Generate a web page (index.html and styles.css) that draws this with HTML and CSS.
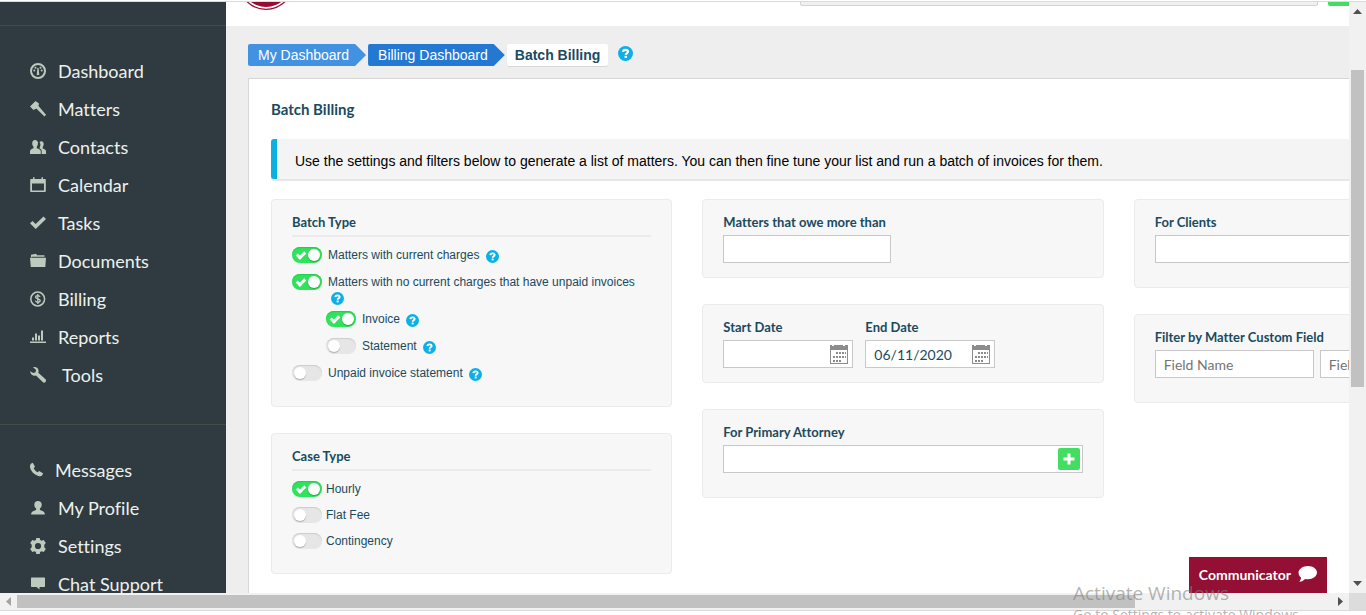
FILE: index.html
```html
<!DOCTYPE html>
<html lang="en">
<head>
<meta charset="utf-8">
<title>Batch Billing</title>
<link rel="stylesheet" href="styles.css">
</head>
<body>
<svg class="defs" aria-hidden="true">
  <symbol id="help" viewBox="0 0 14 14"><circle cx="7" cy="7" r="7" fill="#0cb0e6"/><path d="M4.700 5.500C4.800 4 5.900 3.600 7.100 3.600c1.300 0 2.200.7 2.200 1.700 0 1.500-2.100 1.500-2.100 3" fill="none" stroke="#fff" stroke-width="2"/><rect x="6.100" y="9.200" width="2.200" height="2" fill="#fff"/></symbol>
  <symbol id="cal" viewBox="0 0 18 19"><path d="M0 0h2v1h2V0h9v1h2V0h3v19H0z" fill="#8c8c8c"/><path d="M1 5h16v13H1z" fill="#fff"/><path d="M6 7h2v2H6zM9 7h2v2H9zM12 7h2v2h-2zM15 7h1v2h-1zM3 11h2v2H3zM6 11h2v2H6zM9 11h2v2H9zM12 11h2v2h-2zM15 11h1v2h-1zM3 15h2v2H3zM6 15h2v2H6zM9 15h2v2H9z" fill="#8c8c8c"/></symbol>
</svg>
<div class="window">
  <div class="viewport">
    <div class="app">
      <aside class="sidebar">
        <div class="sidebar-top"></div>
        <nav class="menu">
          <a href="#"><svg width="16" height="16" viewBox="0 0 16 16"><circle cx="8" cy="8" r="7" fill="none" stroke="currentColor" stroke-width="2"/><circle cx="4.300" cy="7.500" r="1" /><circle cx="5.500" cy="4.700" r="1"/><circle cx="10.500" cy="4.700" r="1"/><circle cx="11.700" cy="7.500" r="1"/><path d="M7.400 5h1.200l.7 7H6.700z"/></svg>Dashboard</a>
          <a href="#"><svg width="16" height="16" viewBox="0 0 16 16"><path d="M0 5.500 5.500 0 9 2.500 8.500 5 16 13.800 14.500 15.500 6.300 7.500 3.500 9z"/></svg>Matters</a>
          <a href="#"><svg width="16" height="16" viewBox="0 0 16 16"><path d="M5 1c2 0 3 1.300 3 3.200 0 1.600-.7 2.600-1.200 3.600v1.400c2 .8 4 1.300 4 3.300V15H0v-2.500c0-2 1.600-2.500 3.500-3.300V7.800C2.700 6.800 2.200 5.700 2.200 4.200 2.200 2.300 3.200 1 5 1z"/><path d="M9.500 3c.5-.6 1.100-.8 1.700-.8 1.600 0 2.500 1.200 2.500 2.800 0 1.500-.6 2.300-1 3v1.600c1.800.7 3.300 1.200 3.300 3V15h-4.300v-2.600c0-1.800-1-2.600-2.300-3.200.6-1.200 1.100-2.400 1-4.200z"/></svg>Contacts</a>
          <a href="#"><svg width="16" height="16" viewBox="0 0 16 16"><path d="M1 2h2V.3h1.500V2h7V.3H13V2h2c.6 0 .8.300.8.800V14c0 .7-.3 1-.8 1H1c-.6 0-.8-.3-.8-1V2.800C.2 2.300.4 2 1 2zm1 4.500v7h12v-7z"/></svg>Calendar</a>
          <a href="#"><svg width="16" height="16" viewBox="0 0 16 16"><path d="M0 8.300 2.500 6l3.200 3L13.500 1.500 16 4 5.700 14z"/></svg>Tasks</a>
          <a href="#"><svg width="16" height="16" viewBox="0 0 16 16"><path d="M1 3.500V1.800l5-1 1 1.400h7.500v1.500H2v.6H1z"/><path d="M0 4.800h16L15.300 14H.8z"/></svg>Documents</a>
          <a href="#"><svg width="16" height="16" viewBox="0 0 16 16"><circle cx="7.700" cy="8" r="6.900" fill="none" stroke="currentColor" stroke-width="1.500"/><path d="M10 5.900C9.700 5 8.900 4.700 7.800 4.700c-1.300 0-2.200.6-2.200 1.600 0 2.200 4.600 1 4.600 3.300 0 1.100-1 1.700-2.300 1.700s-2.300-.5-2.600-1.600M7.800 3v10" fill="none" stroke="currentColor" stroke-width="1.300"/></svg>Billing</a>
          <a href="#"><svg width="16" height="16" viewBox="0 0 16 16"><path d="M0 12.500h16V14H0zM2 8.500h2v3H2zM5 4.500h2v7H5zM8 6.500h2v5H8zM11 1.500h2v10h-2z"/></svg>Reports</a>
          <a href="#"><svg width="16" height="16" viewBox="0 0 16 16"><path d="M3 .3C5.500-.5 8 .8 8.500 3.200c.2.900.1 1.700-.2 2.500l7.200 6.600c.7.700.6 1.900 0 2.600-.7.900-2 1-2.800.2L6 8.500C3.800 9.300.5 8 .1 4.200L3.200 6 5.600 5.300 6 2.800z"/></svg>&nbsp;Tools</a>
        </nav>
        <nav class="menu">
          <a href="#"><svg width="13" height="16" viewBox="0 0 13 16"><path d="M.8 1.700 2.800.8 5 4.800 3.700 6.300c.8 1.700 2 3 3.900 4l1.500-1.200 4 2.200-1 2.100c-.8.900-2.200 1-3.700.5C4 12.800.4 8.600 0 5 0 3.500.2 2.500.8 1.700z"/></svg>Messages</a>
          <a href="#"><svg width="16" height="16" viewBox="0 0 16 16"><path d="M8 1c2.400 0 3.700 1.400 3.700 3.700 0 1.600-.8 2.800-1.800 3.900v1.500c2.600.8 5 1.700 5 4.500H1.100c0-2.800 2.500-3.700 5-4.500V8.600c-1-1.100-1.800-2.300-1.800-3.900C4.300 2.400 5.600 1 8 1z"/></svg>My Profile</a>
          <a href="#"><svg width="16" height="16" viewBox="0 0 16 16"><path fill-rule="evenodd" d="m6.300 0h3.400l.5 2.100 1.300.7 2.200-.7L15.800 5l-1.500 1.700v2.600l1.500 1.700-2.100 2.900-2.200-.7-1.300.7L9.700 16H6.300l-.5-2.100-1.300-.7-2.200.7L.2 11l1.500-1.700V6.700L.2 5l2.100-2.900 2.200.7 1.300-.7zM8 4.900a3.100 3.100 0 1 0 0 6.200 3.100 3.100 0 0 0 0-6.200z"/></svg>Settings</a>
          <a href="#"><svg width="16" height="16" viewBox="0 0 16 16"><path d="M2 1.500h12c.7 0 1 .3 1 1V10c0 .7-.3 1-1 1h-4.500v2.500L6.500 11H2c-.7 0-1-.3-1-1V2.500c0-.7.3-1 1-1z"/></svg>Chat Support</a>
        </nav>
      </aside>
      <div class="page">
        <header class="topbar">
          <svg class="logo" width="56" height="56" viewBox="0 0 56 56"><circle cx="28" cy="28" r="27.300" fill="#fff" stroke="#960c32" stroke-width="1.300"/><circle cx="28" cy="28" r="25" fill="#960c32"/></svg>
          <input class="search" type="search" aria-label="Search">
          <button class="topbar-add" aria-label="Add"></button>
        </header>
        <main>
          <div class="crumbs">
            <a class="crumb crumb-light" href="#">My Dashboard</a>
            <a class="crumb" href="#">Billing Dashboard</a>
            <strong class="crumb-current">Batch Billing</strong>
            <button class="crumb-help" aria-label="Help"><svg width="15" height="15"><use href="#help"/></svg></button>
          </div>
          <section class="panel">
            <h1>Batch Billing</h1>
            <p class="notice">Use the settings and filters below to generate a list of matters. You can then fine tune your list and run a batch of invoices for them.</p>
            <div class="columns">
              <div class="column">
                <fieldset class="card">
                  <h2 class="ruled">Batch Type</h2>
                  <div class="option"><input type="checkbox" id="o1" checked><div class="option-text"><label for="o1">Matters with current charges</label> <svg class="help"><use href="#help"/></svg></div></div>
                  <div class="option"><input type="checkbox" id="o2" checked><div class="option-text"><label for="o2">Matters with no current charges that have unpaid invoices</label> <svg class="help"><use href="#help"/></svg></div></div>
                  <div class="option nested"><input type="checkbox" id="o3" checked><div class="option-text"><label for="o3">Invoice</label> <svg class="help"><use href="#help"/></svg></div></div>
                  <div class="option nested"><input type="checkbox" id="o4"><div class="option-text"><label for="o4">Statement</label> <svg class="help"><use href="#help"/></svg></div></div>
                  <div class="option"><input type="checkbox" id="o5"><div class="option-text"><label for="o5">Unpaid invoice statement</label> <svg class="help"><use href="#help"/></svg></div></div>
                </fieldset>
                <fieldset class="card compact">
                  <h2 class="ruled">Case Type</h2>
                  <div class="option"><input type="checkbox" id="c1" checked><label class="option-text" for="c1">Hourly</label></div>
                  <div class="option"><input type="checkbox" id="c2"><label class="option-text" for="c2">Flat Fee</label></div>
                  <div class="option"><input type="checkbox" id="c3"><label class="option-text" for="c3">Contingency</label></div>
                </fieldset>
              </div>
              <div class="column">
                <div class="card">
                  <label class="title" for="owe">Matters that owe more than</label>
                  <div class="field amount"><input type="text" id="owe"></div>
                </div>
                <div class="card dates">
                  <div>
                    <label class="title" for="start">Start Date</label>
                    <div class="field date"><input type="text" id="start"><button aria-label="Pick start date"><svg width="18" height="19"><use href="#cal"/></svg></button></div>
                  </div>
                  <div>
                    <label class="title" for="end">End Date</label>
                    <div class="field date"><input type="text" id="end" value="06/11/2020"><button aria-label="Pick end date"><svg width="18" height="19"><use href="#cal"/></svg></button></div>
                  </div>
                </div>
                <div class="card tall">
                  <label class="title" for="attorney">For Primary Attorney</label>
                  <div class="field"><input type="text" id="attorney"><button class="add" aria-label="Add attorney"><svg width="12" height="12" viewBox="0 0 12 12"><path d="M6 0.500v11M0.500 6h11" stroke="#fff" stroke-width="3"/></svg></button></div>
                </div>
              </div>
              <div class="column">
                <div class="card tall">
                  <label class="title" for="clients">For Clients</label>
                  <div class="field"><input type="text" id="clients"></div>
                </div>
                <div class="card tall">
                  <label class="title" for="fname">Filter by Matter Custom Field</label>
                  <div class="pair">
                    <div class="field custom"><input type="text" id="fname" placeholder="Field Name"></div>
                    <div class="field custom"><input type="text" aria-label="Field Value" placeholder="Field Value"></div>
                  </div>
                </div>
              </div>
            </div>
          </section>
        </main>
      </div>
    </div>
    <button class="communicator">Communicator<svg width="19" height="16" viewBox="0 0 19 16"><path d="M10 0c5 0 9 2.900 9 6.600s-4 6.700-9 6.700c-1 0-2-.1-2.900-.3C5.700 14.500 3.500 15.700 1.300 16c1-1.300 1.700-2.700 1.700-4.400C1.400 10.300.5 8.600.5 6.600.5 2.900 5 0 10 0z" fill="#fff"/></svg></button>
  </div>
  <div class="scroll-y"><svg width="9" height="5"><path d="M0 5 4.500 0 9 5z"/></svg><div class="thumb-y"></div><svg width="9" height="5"><path d="M0 0 4.500 5 9 0z"/></svg></div>
  <div class="scroll-x"><svg class="disabled" width="5" height="9"><path d="M5 0 0 4.500 5 9z"/></svg><div class="track-x"><div class="thumb-x"></div></div><svg width="5" height="9"><path d="M0 0 5 4.500 0 9z"/></svg></div>
  <div class="corner"></div>
</div>
<div class="watermark"><div class="watermark-title">Activate Windows</div><div>Go to Settings to activate Windows.</div></div>
</body>
</html>
```
FILE: styles.css
```css
* { box-sizing: border-box; }

body {
  margin: 0;
  height: 100vh;
  padding: 1px 0 4px;
  display: flex;
  overflow: hidden;
  position: relative;
  background: #fff;
  color: #1a4a5e;
  font-family: "Liberation Sans", Arial, sans-serif;
  font-variant-ligatures: none;
}

h1, h2, p, fieldset { margin: 0; padding: 0; border: 0; }
button { border: 0; padding: 0; background: none; font: inherit; color: inherit; }
a { text-decoration: none; }
.defs { position: absolute; width: 0; height: 0; }

.window {
  flex: 1;
  min-width: 0;
  display: grid;
  grid-template: minmax(0, 1fr) 17px / minmax(0, 1fr) 17px;
  border-top: 1px solid #d9dadb;
  border-bottom: 1px solid #d9d9d9;
}
.viewport { position: relative; overflow: hidden; }
.app { display: flex; min-width: 1580px; min-height: 100%; }

/* Sidebar */
.sidebar { width: 226px; flex: none; background: #2f3b40; }
.sidebar-top { height: 24px; border-bottom: 1px solid #424c4b; }
.menu { padding: 26px 0 30px; border-bottom: 1px solid #424c4b; }
.menu:last-child { border-bottom: 0; }
.menu a {
  display: flex;
  align-items: center;
  gap: 12px;
  height: 38px;
  padding-left: 30px;
  color: #edf1ee;
  font-family: Lato, sans-serif;
  font-size: 18px;
  line-height: 38px;
}
.menu svg { color: #bccbbd; fill: currentColor; flex: none; }

/* Header */
.page { flex: 1; min-width: 0; background: #eee; }
.topbar {
  height: 24px;
  display: flex;
  align-items: flex-start;
  justify-content: flex-start;
  overflow: hidden;
  background: #fff;
  padding-left: 12px;
}
.logo { flex: none; margin-top: -48px; }
.search {
  width: 518px;
  height: 28px;
  margin: -24px 10px 0 506px;
  border: 1px solid #d2d2d2;
  border-radius: 2px;
  background: #f0f0f0;
}
.topbar-add { width: 30px; height: 28px; margin-top: -24px; border-radius: 2px; background: #43dd61; }

/* Breadcrumbs */
main { padding: 18px 22px 30px; }
.crumbs { display: flex; gap: 2px; margin-bottom: 12px; font-size: 14px; line-height: 22px; }
.crumb {
  padding: 0 17px 0 10px;
  color: #fff;
  background: #2379d2;
  border-radius: 2px;
  clip-path: polygon(0 0, calc(100% - 11px) 0, 100% 50%, calc(100% - 11px) 100%, 0 100%);
}
.crumb-light { background: #4391e1; }
.crumb-current { padding: 0 8px; background: #fff; border-radius: 2px; box-shadow: 0 1px 0 #d8d8d8; }
.crumb-help { display: flex; margin: 2px 8px; }

/* Panel */
.panel { padding: 20px 22px 40px; border: 1px solid #d7d7d7; background: #fff; }
h1 { margin-bottom: 20px; font-family: Lato, sans-serif; font-size: 15px; line-height: 20px; }
.notice {
  margin-bottom: 20px;
  padding: 4px 18px 0;
  border-left: 6px solid #0cb0e0;
  border-radius: 3px;
  box-shadow: 0 2px 0 #e6e6e6;
  background: #f4f4f4;
  color: #000;
  font-size: 14px;
  line-height: 36px;
}
.columns { display: grid; grid-template-columns: repeat(3, minmax(0, 1fr)); gap: 30px; align-items: start; }
.column { display: grid; gap: 26px; }

.card { min-width: 0; padding: 14px 20px; border: 1px solid #ebebeb; border-radius: 4px; background: #f7f7f7; }
.card.tall { padding-bottom: 24px; }
h2, .title { display: block; padding-bottom: 5px; font-family: Lato, sans-serif; font-weight: bold; font-size: 13px; line-height: 16px; }
.ruled { margin-bottom: 10px; border-bottom: 2px solid #ebebeb; }

.option { display: flex; gap: 6px; min-height: 27px; padding-bottom: 6px; font-size: 12px; line-height: 15px; }
.option-text { padding-top: 1px; }
.option.nested { padding-left: 34px; }
.compact .option { gap: 4px; min-height: 26px; }
.help { width: 13px; height: 13px; margin-left: 3px; vertical-align: -4px; }

/* Toggle switch */
.option input {
  appearance: none;
  position: relative;
  flex: none;
  width: 30px;
  height: 16px;
  margin: 0;
  border-radius: 8px;
  background: #e6e6e6;
  box-shadow: inset 0 1px 1px #ccc;
}
.option input::after {
  content: "";
  position: absolute;
  top: 2px;
  left: 2px;
  width: 12px;
  height: 12px;
  border-radius: 50%;
  background: #fff;
  box-shadow: 0 1px 1px rgba(0, 0, 0, .25);
}
.option input:checked { background: #2fe35c; box-shadow: inset 0 1px 1px #28c850; }
.option input:checked::after { left: 16px; }
.option input:checked::before {
  content: "";
  position: absolute;
  box-sizing: border-box;
  top: 3px;
  left: 6px;
  width: 6px;
  height: 9px;
  border: solid #fff;
  border-width: 0 3px 3px 0;
  transform: rotate(45deg);
}

/* Fields */
.field { display: flex; align-items: center; height: 28px; border: 1px solid #c8c8c8; background: #fff; padding-right: 2px; }
.field input {
  flex: 1;
  min-width: 0;
  height: 26px;
  padding: 0 8px;
  border: 0;
  outline: 0;
  background: none;
  color: #1a4a5e;
  font-family: Lato, sans-serif;
  font-size: 14px;
}
.field input::placeholder { color: #757575; }
.field button { display: flex; align-items: center; justify-content: center; }
.amount { width: 168px; }
.date { width: 130px; padding-right: 4px; }
.dates { display: flex; gap: 12px; }
.pair { display: flex; gap: 6px; }
.custom { width: 159px; }
.add { width: 22px; height: 22px; border-radius: 2px; background: #43dd61; }

.communicator {
  position: absolute;
  right: 22px;
  bottom: 0;
  height: 36px;
  padding: 0 10px 2px;
  display: flex;
  align-items: center;
  gap: 7px;
  background: #930f33;
  color: #fff;
  font: bold 14px Lato, sans-serif;
}

/* Scroll bars */
.scroll-y, .scroll-x { display: flex; align-items: center; background: #f1f1f1; fill: #505050; }
.scroll-y { flex-direction: column; padding: 7px 0; }
.scroll-x { padding: 0 6px; }
.thumb-y { width: 13px; height: 55%; margin: 56px 0 auto; background: #c1c1c1; }
.track-x { flex: 1; margin: 0 6px; }
.thumb-x { width: 85%; height: 13px; background: #c1c1c1; }
.disabled { fill: #a3a3a3; }
.corner { background: #dcdcdc; }

.watermark {
  position: absolute;
  left: 1073px;
  top: 580px;
  color: rgba(130, 130, 130, .6);
  font: 14px/18px "Open Sans", sans-serif;
  white-space: nowrap;
}
.watermark-title { font-size: 19px; line-height: 26px; }
```
